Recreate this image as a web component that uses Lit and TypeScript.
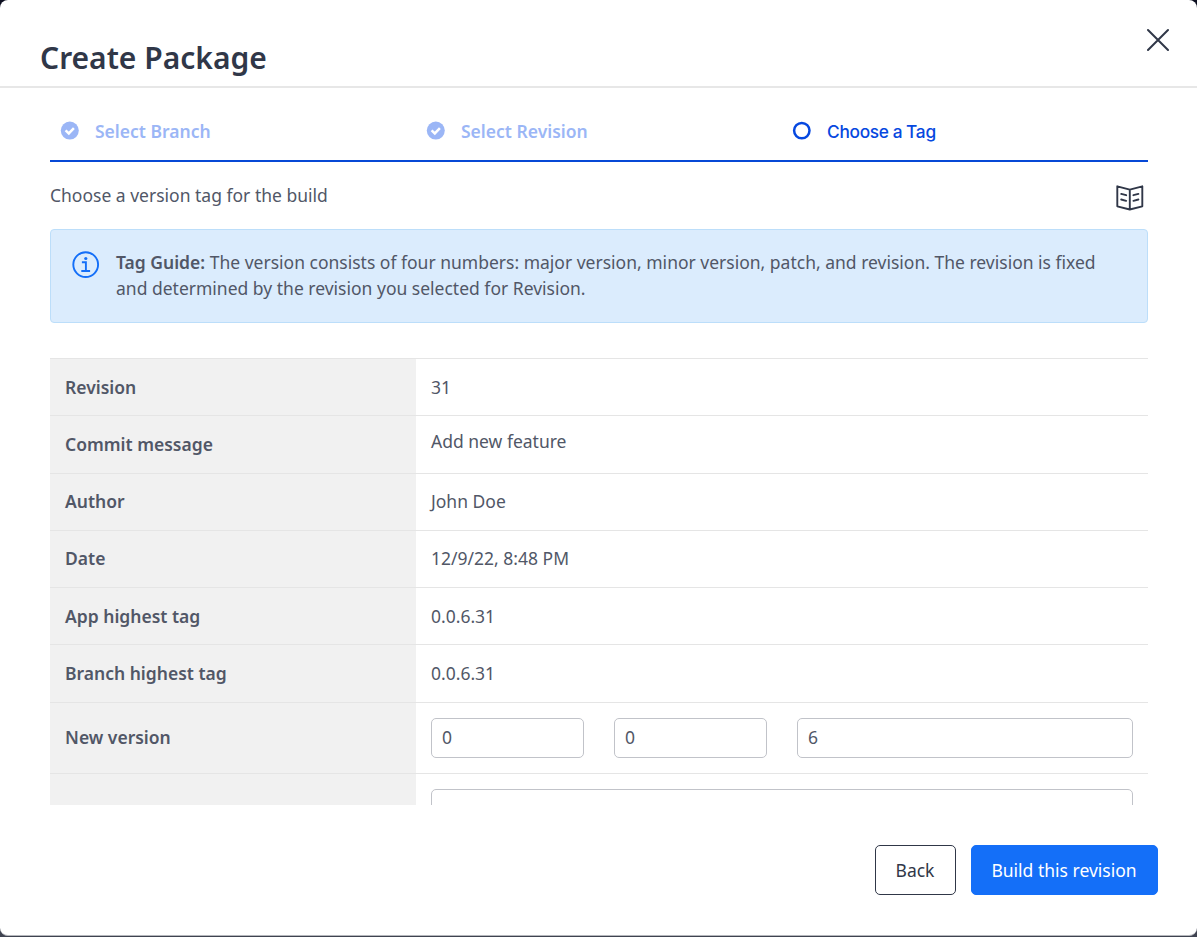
import { LitElement, html, css, svg } from "lit";
import { customElement } from "lit/decorators.js";
import { classMap } from "lit/directives/class-map.js";

const checkIcon = svg`<svg class="mark" viewBox="0 0 18 18"><circle cx="8.8" cy="8.6" r="9" fill="#9bb6f6"/><path d="M4.6 8.4 7.8 11.4 12.9 6.1" fill="none" stroke="#fff" stroke-width="2.5"/></svg>`;
const ringIcon = svg`<svg class="mark" viewBox="0 0 18 18"><circle cx="8.8" cy="8.6" r="7.7" fill="none" stroke="#0648e0" stroke-width="2.5"/></svg>`;

@customElement("app-root")
export class AppRoot extends LitElement {
  static styles = css`
    :host { display: block; height: 937px; background: linear-gradient(#0c0f20 50%, #3f4350 50%); font-family: "Noto Sans", sans-serif; font-size: 17.5px; color: #515767; }
    * { box-sizing: border-box; }
    .dialog { height: 936px; display: flex; flex-direction: column; background: #fff; border-radius: 8px; overflow: hidden; border-bottom: 1px solid #b5b7bc; }
    .head { height: 88px; flex: none; display: flex; justify-content: space-between; align-items: flex-start; border-bottom: 2px solid #e7e7e7; padding: 28px 28px 0 40px; }
    .title { margin: 9px 0 0; font-size: 30px; line-height: 42px; font-weight: 600; color: #303748; }
    .close { width: 23px; height: 23px; display: block; }
    .steps { flex: none; display: grid; grid-template-columns: repeat(3, 1fr); height: 74px; margin: 0 49px 0 50px; border-bottom: 2px solid #0648d6; padding-top: 30px; }
    .step { display: flex; align-items: flex-start; gap: 16px; padding-left: 11px; line-height: 26px; font-weight: 600; color: #9bb6f6; }
    .current { color: #0648e0; font-family: Inter, sans-serif; font-size: 17.3px; font-weight: 550; line-height: 28px; letter-spacing: -0.28px; word-spacing: -0.4px; }
    .mark { width: 18px; height: 18px; margin-top: 4px; overflow: visible; }
    .intro { flex: none; height: 67px; margin: 0 49px 0 50px; padding: 19px 4px 0 0; display: flex; justify-content: space-between; line-height: 28px; }
    .book { width: 28px; height: 26px; margin-top: 4px; }
    .guide { flex: none; display: flex; margin: 0 49px 0 50px; height: 94px; border: 1px solid #bcdefa; background: #dbecfd; border-radius: 4px; padding: 19px 21px; gap: 16px; line-height: 26px; }
    .info { width: 28px; height: 28px; flex: none; margin-top: 1px; }
    .guide p { margin: 0; white-space: nowrap; }
    b { font-weight: 600; }
    .table { flex: none; height: 447px; overflow: hidden; margin: 35px 49px 0 50px; }
    .row { display: grid; grid-template-columns: 366px 1fr; height: 57px; border-top: 1px solid #e5e5e5; }
    .tall { height: 58px; }
    .form { height: 71px; }
    .key, .val { padding-left: 15px; display: flex; align-items: center; }
    .key { background: #f1f1f1; font-weight: 600; }
    .raised > .key, .raised > .val { padding-bottom: 2px; }
    .raised > .message { padding-bottom: 8px; }
    .form > .fields { display: grid; grid-template-columns: 153px 153px 1fr; gap: 30px; padding: 0 15px; }
    .field { height: 40px; width: 100%; border: 1px solid #c1c3c9; border-radius: 5px; padding: 0 10px 2px; font: inherit; color: inherit; background: #fff; outline: none; display: block; }
    .form > .wide { padding: 0 15px; }
    .foot { display: flex; justify-content: flex-end; gap: 15px; padding: 40px 39px 0 0; }
    .btn { height: 50px; border-radius: 5px; border: 1px solid #303748; background: #fff; color: #303748; font: inherit; width: 81px; padding: 0 1px 0 0; white-space: nowrap; }
    .primary { background: #146ff8; border-color: #146ff8; color: #fff; width: 187px; }
  `;

  private steps = [
    { label: "Select Branch", done: true },
    { label: "Select Revision", done: true },
    { label: "Choose a Tag", done: false },
  ];
  private details = [
    { key: "Revision", value: "31" },
    { key: "Commit message", value: "Add new feature", tall: true, message: true, raised: true },
    { key: "Author", value: "John Doe", raised: true },
    { key: "Date", value: "12/9/22, 8:48 PM", raised: true },
    { key: "App highest tag", value: "0.0.6.31" },
    { key: "Branch highest tag", value: "0.0.6.31", tall: true, raised: true },
  ];

  render() {
    return html`
      <div class="dialog">
        <header class="head">
          <h1 class="title">Create Package</h1>
          <svg class="close" viewBox="0 0 23 23"><path d="M2 2 22 22M22 2 2 22" stroke="#303748" stroke-width="2" stroke-linecap="round"/></svg>
        </header>
        <nav class="steps">
          ${this.steps.map((s) => html`<div class=${classMap({ step: true, current: !s.done })}>${s.done ? checkIcon : ringIcon}<span>${s.label}</span></div>`)}
        </nav>
        <div class="intro">
          <span>Choose a version tag for the build</span>
          <svg class="book" viewBox="0 0 28 26" fill="none" stroke="#303748" stroke-width="1.9" stroke-linejoin="round" stroke-linecap="round"><path d="M1.3 1.3 13.8 4.7 26.3 1.3V21.3L13.8 24.5 1.3 21.3ZM13.8 4.7V24.5M5.2 8.9 10.2 10.2M5.2 14.5 10.2 15.8M17.4 10.2 22.4 8.9M17.4 15.8 22.4 14.5"/></svg>
        </div>
        <section class="guide">
          <svg class="info" viewBox="0 0 28 28" fill="none" stroke="#146ff8" stroke-width="1.9"><circle cx="13.7" cy="14.6" r="12.4"/><path d="M9.9 12.3H13.9V20.8M9.3 21H18.1"/><circle cx="13.8" cy="8.5" r="1.6" fill="#146ff8" stroke="none"/></svg>
          <p><b>Tag Guide:</b> The version consists of four numbers: major version, minor version, patch, and revision. The revision is fixed<br />and determined by the revision you selected for Revision.</p>
        </section>
        <div class="table">
          ${this.details.map((d) => html`<div class=${classMap({ row: true, tall: !!d.tall, raised: !!d.raised })}>
            <div class="key">${d.key}</div>
            <div class=${classMap({ val: true, message: !!d.message })}>${d.value}</div>
          </div>`)}
          <div class="row form raised">
            <div class="key">New version</div>
            <div class="val fields">${["0", "0", "6"].map((v) => html`<input class="field" .value=${v} />`)}</div>
          </div>
          <div class="row form">
            <div class="key"></div>
            <div class="val wide"><input class="field" /></div>
          </div>
        </div>
        <footer class="foot">
          <button class="btn">Back</button>
          <button class="btn primary">Build this revision</button>
        </footer>
      </div>
    `;
  }
}
